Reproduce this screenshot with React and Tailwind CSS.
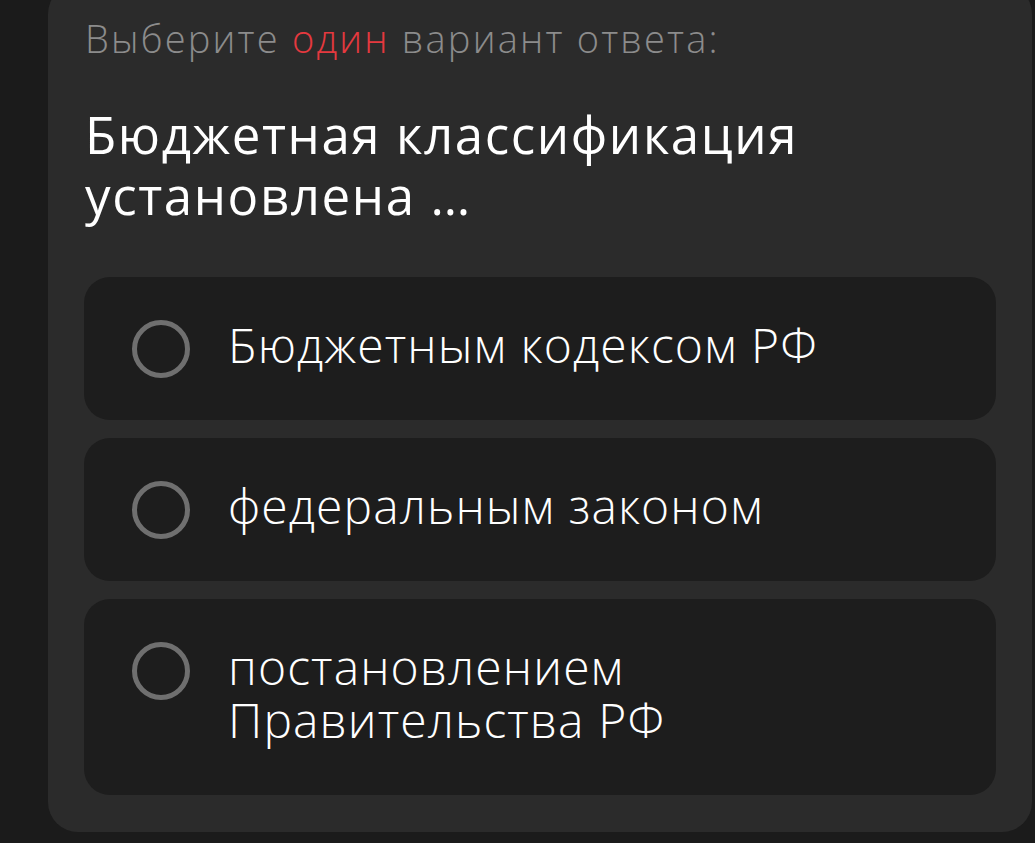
export default function App() {
  const options = [
    ["Бюджетным кодексом РФ"],
    ["федеральным законом"],
    ["постановлением", "Правительства РФ"],
  ];
  return (
    <div className="h-[843px] w-full overflow-hidden bg-[#1b1b1b] pl-[48px] pr-[3px]" style={{ fontFamily: "'Open Sans', 'Noto Sans', sans-serif" }}>
      <div className="-mt-[16px] rounded-[30px] bg-[#2b2b2b] px-[36px] pb-[37px] pt-[32px]">
        <div className="text-[38px] leading-[44px] tracking-[2.2px] text-[#8c8c8c] pl-[1px] font-light">
          Выберите <span className="text-[#e5393f]">один</span> вариант ответа:
        </div>
        <div className="mt-[44px] text-[51px] leading-[61px] tracking-[1.6px] text-white pl-[1px] font-normal">
          Бюджетная классификация<br />установлена <span className="tracking-normal">…</span>
        </div>
        <div className="mt-[51px] flex flex-col gap-[18px]">
          {options.map((lines, i) => (
            <div key={i} className="flex items-start rounded-[26px] bg-[#1d1d1d] pl-[48px] pr-6 pt-[41px] pb-[49px]">
              <div className="mt-[2px] -mb-[10px] h-[58px] w-[58px] shrink-0 rounded-full border-[5px] border-[#6f6f6f]" />
              <div className="ml-[38px] text-[48px] leading-[53px] tracking-[1.1px] text-white font-light">
                {lines.map((l, j) => (
                  <div key={j}>{l}</div>
                ))}
              </div>
            </div>
          ))}
        </div>
      </div>
    </div>
  );
}
